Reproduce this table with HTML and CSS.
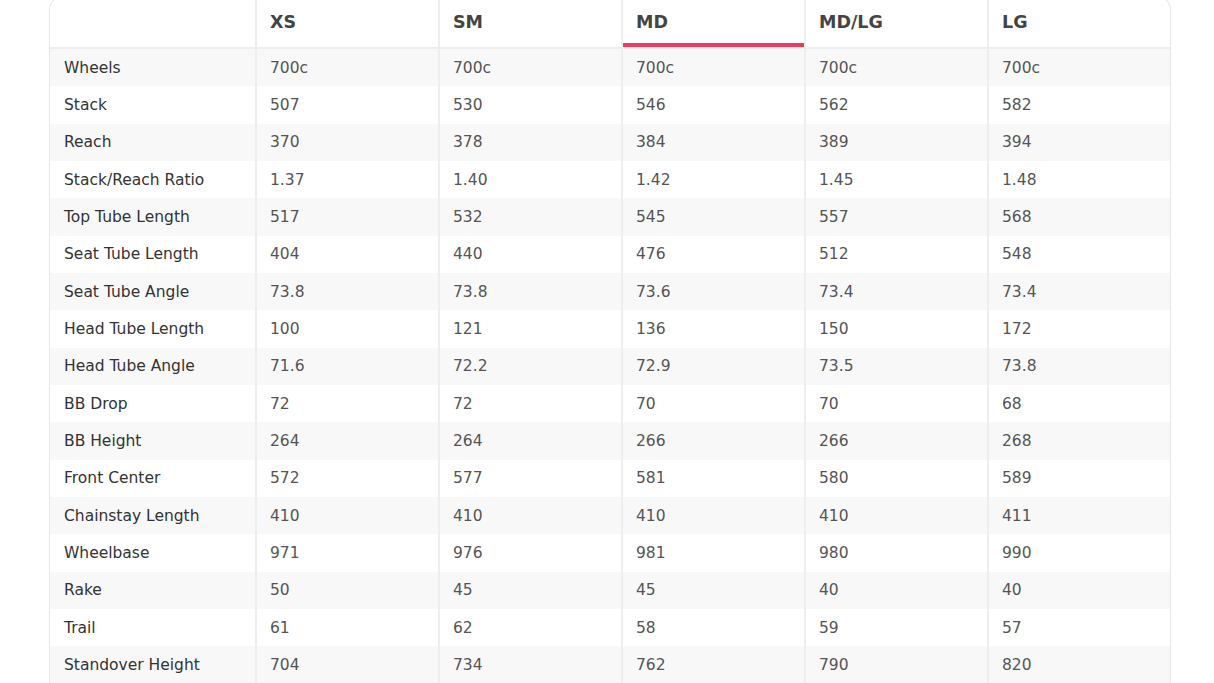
FILE: index.html
```html
<!DOCTYPE html>
<html>
<head>
<meta charset="utf-8">
<link rel="stylesheet" href="styles.css">
</head>
<body>
<div class="wrap">
<table class="geo">
<colgroup><col class="c-label"><col class="c-size"><col class="c-size"><col class="c-size"><col class="c-size"><col></colgroup>
<thead>
<tr><th class="label"></th><th>XS</th><th>SM</th><th class="active">MD</th><th>MD/LG</th><th>LG</th></tr>
</thead>
<tbody>
<tr><td class="label">Wheels</td><td>700c</td><td>700c</td><td>700c</td><td>700c</td><td>700c</td></tr>
<tr><td class="label">Stack</td><td>507</td><td>530</td><td>546</td><td>562</td><td>582</td></tr>
<tr><td class="label">Reach</td><td>370</td><td>378</td><td>384</td><td>389</td><td>394</td></tr>
<tr><td class="label">Stack/Reach Ratio</td><td>1.37</td><td>1.40</td><td>1.42</td><td>1.45</td><td>1.48</td></tr>
<tr><td class="label">Top Tube Length</td><td>517</td><td>532</td><td>545</td><td>557</td><td>568</td></tr>
<tr><td class="label">Seat Tube Length</td><td>404</td><td>440</td><td>476</td><td>512</td><td>548</td></tr>
<tr><td class="label">Seat Tube Angle</td><td>73.8</td><td>73.8</td><td>73.6</td><td>73.4</td><td>73.4</td></tr>
<tr><td class="label">Head Tube Length</td><td>100</td><td>121</td><td>136</td><td>150</td><td>172</td></tr>
<tr><td class="label">Head Tube Angle</td><td>71.6</td><td>72.2</td><td>72.9</td><td>73.5</td><td>73.8</td></tr>
<tr><td class="label">BB Drop</td><td>72</td><td>72</td><td>70</td><td>70</td><td>68</td></tr>
<tr><td class="label">BB Height</td><td>264</td><td>264</td><td>266</td><td>266</td><td>268</td></tr>
<tr><td class="label">Front Center</td><td>572</td><td>577</td><td>581</td><td>580</td><td>589</td></tr>
<tr><td class="label">Chainstay Length</td><td>410</td><td>410</td><td>410</td><td>410</td><td>411</td></tr>
<tr><td class="label">Wheelbase</td><td>971</td><td>976</td><td>981</td><td>980</td><td>990</td></tr>
<tr><td class="label">Rake</td><td>50</td><td>45</td><td>45</td><td>40</td><td>40</td></tr>
<tr><td class="label">Trail</td><td>61</td><td>62</td><td>58</td><td>59</td><td>57</td></tr>
<tr><td class="label">Standover Height</td><td>704</td><td>734</td><td>762</td><td>790</td><td>820</td></tr>
</tbody>
</table>
</div>
</body>
</html>
```
FILE: styles.css
```css
html, body {
  margin: 0;
  padding: 0;
  background: #fff;
  overflow: hidden;
}
body {
  font-family: "DejaVu Sans", "Noto Sans", sans-serif;
}
.wrap {
  margin: -4px 0 0 49px;
  width: 1120px;
  border: 1px solid #e6e6e6;
  border-bottom: none;
  border-radius: 14px 14px 0 0;
  overflow: hidden;
}
.geo {
  width: 100%;
  border-collapse: collapse;
  table-layout: fixed;
}
.c-label { width: 206px; }
.c-size { width: 183px; }
.geo th, .geo td {
  text-align: left;
  padding: 0 0 0 13px;
  border-left: 2px solid #eeeeee;
  white-space: nowrap;
}
.geo th:first-child, .geo td:first-child {
  border-left: none;
  padding-left: 14px;
}
.geo th {
  height: 50px;
  font-size: 17.5px;
  font-weight: bold;
  color: #444;
  border-bottom: 2px solid #eeeeee;
  position: relative;
}
.geo th.active::after {
  content: "";
  position: absolute;
  left: 0;
  right: 0;
  bottom: 0;
  height: 4px;
  background: #ee3a5d;
}
.geo td {
  height: 37.33px;
  font-size: 15.5px;
  color: #555;
}
.geo td.label {
  color: #333;
}
.geo tbody tr:nth-child(odd) td {
  background: #f8f8f8;
}
```
